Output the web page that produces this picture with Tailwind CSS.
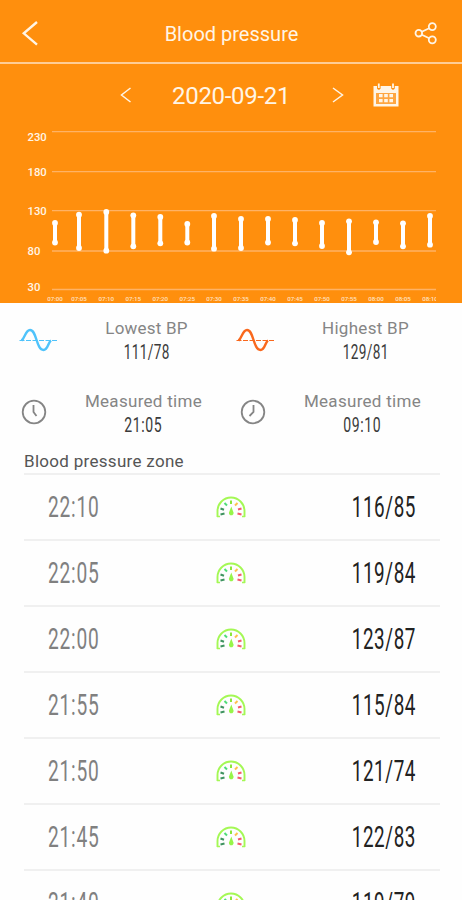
<!DOCTYPE html>
<html lang="en">
<head>
    <meta charset="UTF-8" />
    <meta name="viewport" content="width=device-width, initial-scale=1.0" />
    <title>Blood pressure</title>
    <script src="https://cdn.jsdelivr.net/npm/@tailwindcss/browser@4"></script>
</head>
<body class="h-screen overflow-hidden bg-[#fefefe] font-['Roboto',sans-serif] text-[#858585]">
<div class="flex flex-col w-full">
    <div class="h-[303px] bg-[#ff8f0d] text-[#fff5e6]">
        <!-- Header -->
        <header class="flex items-center justify-between h-16 pl-5 pr-6 pt-1 border-b-2 border-[#ffcd95]">
            <button title="Back">
                <svg class="w-5 h-7" viewBox="0 0 20 28" fill="none" stroke="currentColor" stroke-width="2.4">
                    <path d="M17 3L3.8 14.3L17 25.6" />
                </svg>
            </button>
            <h1 class="text-[20px] leading-7 pt-0.5 pl-[9px]">Blood pressure</h1>
            <button title="Share">
                <svg class="w-6 h-6" viewBox="0 0 24 24" fill="none" stroke="currentColor" stroke-width="1.8">
                    <circle cx="4.8" cy="12.2" r="3.3" />
                    <circle cx="18.3" cy="5.6" r="3.5" />
                    <circle cx="18.3" cy="18.8" r="3.5" />
                    <path d="M7.8 10.7L15.2 7.2M7.8 13.7L15.2 17.2" />
                </svg>
            </button>
        </header>

        <!-- Date picker -->
        <div class="flex items-center h-[62px] pl-[120px]">
            <svg class="w-3 h-4" viewBox="0 0 12 16" fill="none" stroke="currentColor" stroke-width="1.5">
                <path d="M10.5 1L1.5 8L10.5 15" />
            </svg>
            <span class="w-[118px] ml-[40px] text-[24px] leading-8 pt-0.5 tracking-[-0.3px] whitespace-nowrap">2020-09-21</span>
            <svg class="w-3 h-4 ml-[42px]" viewBox="0 0 12 16" fill="none" stroke="currentColor" stroke-width="1.5">
                <path d="M1 1L10.5 8L1 15" />
            </svg>
            <svg class="w-[26px] h-6 ml-[29px]" viewBox="0 0 26 24" fill="none">
                <path d="M0.5 3H4V5.5Q5.8 8 7.6 5.5V3H18.2V5.5Q20 8 21.8 5.5V3H25.5V23.5H0.5Z" fill="currentColor" />
                <path d="M5.8 0.5V5M20 0.5V5" stroke="currentColor" stroke-width="1.8" />
                <path d="M3 10H23V21H3Z" fill="#ffa640" />
                <path d="M6 11h3.6v3.2H6zM11.2 11h3.6v3.2h-3.6zM16.4 11h3.6v3.2h-3.6zM6 16h3.6v3.2H6zM11.2 16h3.6v3.2h-3.6zM16.4 16h3.6v3.2h-3.6z" fill="currentColor" />
            </svg>
        </div>

        <!-- Chart -->
        <svg id="chart" class="block w-[436px] h-[177px]" viewBox="0 126 436 177" fill="currentColor"></svg>
    </div>

    <!-- Summary -->
    <section class="grid grid-cols-[219px_219px] h-[146px] pt-[14px]">
        <div class="flex h-[73px]">
            <svg class="shrink-0 w-10 h-6 ml-[18px] mt-[11px] text-[#4fc3fb]" viewBox="0 0 40 24" fill="none" stroke="currentColor">
                <path d="M1.5 12.5H39" stroke-width="1.2" stroke-dasharray="5 1.5" />
                <path d="M3.5 12.5C7 10 7.5 2 12 2C19 2 18 22 25.5 22C30 22 30 14.5 33 12.5" stroke-width="2.4" />
            </svg>
            <div class="w-[177px] flex flex-col items-center shrink-0 pt-px text-center">
                <span class="text-[17px] leading-5 tracking-[0.2px]">Lowest BP</span>
                <span class="text-[20px] leading-7 tracking-[0.5px] text-[#3a3a3a] scale-x-[.68]">111/78</span>
            </div>
        </div>
        <div class="flex h-[73px]">
            <svg class="shrink-0 w-10 h-6 ml-4 mt-[11px] text-[#f9681d]" viewBox="0 0 40 24" fill="none" stroke="currentColor">
                <path d="M1.5 12.5H39" stroke-width="1.2" stroke-dasharray="5 1.5" />
                <path d="M3.5 12.5C7 10 7.5 2 12 2C19 2 18 22 25.5 22C30 22 30 14.5 33 12.5" stroke-width="2.4" />
            </svg>
            <div class="w-[181px] flex flex-col items-center shrink-0 pt-px text-center">
                <span class="text-[17px] leading-5 tracking-[0.3px]">Highest BP</span>
                <span class="text-[20px] leading-7 tracking-[0.5px] text-[#3a3a3a] scale-x-[.68]">129/81</span>
            </div>
        </div>
        <div class="flex h-[73px]">
            <svg class="shrink-0 w-[26px] h-[26px] ml-[21px] mt-[9px]" viewBox="0 0 26 26" fill="none" stroke="currentColor" stroke-width="1.8">
                <circle cx="13" cy="13" r="11.3" />
                <path d="M12.5 6V13L15.5 17" />
            </svg>
            <div class="w-[193px] flex flex-col items-center shrink-0 pt-px text-center">
                <span class="text-[17px] leading-5 tracking-[0.3px]">Measured time</span>
                <span class="text-[20px] leading-7 tracking-[0.9px] text-[#3a3a3a] scale-x-[.7]">21:05</span>
            </div>
        </div>
        <div class="flex h-[73px]">
            <svg class="shrink-0 w-[26px] h-[26px] ml-[21px] mt-[9px]" viewBox="0 0 26 26" fill="none" stroke="currentColor" stroke-width="1.8">
                <circle cx="13" cy="13" r="11.3" />
                <path d="M13.5 6V13L9.5 17" />
            </svg>
            <div class="w-[193px] flex flex-col items-center shrink-0 pt-px text-center">
                <span class="text-[17px] leading-5 tracking-[0.3px]">Measured time</span>
                <span class="text-[20px] leading-7 tracking-[0.9px] text-[#3a3a3a] scale-x-[.7]">09:10</span>
            </div>
        </div>
    </section>

    <!-- Readings -->
    <h2 class="h-[26px] pl-6 text-[17px] leading-[25px] tracking-[0.3px] text-[#555]">Blood pressure zone</h2>
    <ul id="readings" class="ml-6 mr-[22px] -mt-[2px] border-t-2 border-[#f0f0f0]"></ul>
</div>

<script>
    const chart = document.getElementById('chart');
    const readings = document.getElementById('readings');

    // grid lines: label, line y, label baseline
    const levels = [[230, 131.6, 140.5], [180, 171.7, 176], [130, 210.6, 215.3], [80, 251, 255.3], [30, 289.5, 290.5]];

    // time, x, top, bottom
    const bars = [
        ['07:00', 55, 223, 242.5], ['07:05', 79, 214.7, 248], ['07:10', 106.3, 212, 250.7],
        ['07:15', 133.3, 215.3, 246.3], ['07:20', 160.3, 217, 243.3], ['07:25', 187.3, 224, 242.5],
        ['07:30', 214, 216, 248.7], ['07:35', 241, 219, 248], ['07:40', 268, 219, 242.5],
        ['07:45', 295, 220, 243.3], ['07:50', 322, 223, 246], ['07:55', 349, 221.3, 252.3],
        ['08:00', 376, 222.3, 242], ['08:05', 403, 223.3, 246.3], ['08:10', 430, 216, 244.7],
    ];

    let svg = '';
    levels.forEach(([label, y, base]) => {
        svg += `<path d="M52 ${y}H436" stroke="#ffb265" stroke-width="1.3" />`;
        svg += `<text x="27.5" y="${base}" font-size="11.3" font-weight="500">${label}</text>`;
    });
    bars.forEach(([time, x, top, bottom]) => {
        svg += `<path d="M${x} ${top}V${bottom}" stroke="#fff" stroke-width="4" />`;
        svg += `<circle cx="${x}" cy="${top}" r="2.9" fill="#fff" /><circle cx="${x}" cy="${bottom}" r="2.9" fill="#fff" />`;
        svg += `<text x="${x}" y="300.7" font-size="6.2" font-weight="500" text-anchor="middle" fill="#ffe2c2">${time}</text>`;
    });
    chart.innerHTML = svg;

    const gauge = `
        <svg class="w-[30px] h-[22px]" viewBox="0 0 30 22" fill="none">
            <path d="M1.5 21V15A13.5 13.5 0 0 1 28.5 15V21" stroke="#a4f855" stroke-width="1.9" />
            <path d="M1 20.5H4M26 20.5H29" stroke="#a4f855" stroke-width="1.5" />
            <path d="M4.5 18.5L8.5 17.5M4.5 12.5L8 13.8" stroke="#3f9460" stroke-width="2" />
            <path d="M8.5 7L11 9.5" stroke="#4fdc78" stroke-width="2" />
            <path d="M15 4.5V8" stroke="#8be63a" stroke-width="2" />
            <path d="M21.5 7L19 9.5" stroke="#ffc04e" stroke-width="2" />
            <path d="M25.5 12.5L22 13.5M25.5 18.5L21.5 17.5" stroke="#f45a6c" stroke-width="2" />
            <path d="M15.3 10.5L17.5 16.5A2.3 2.3 0 1 1 13 16.5Z" fill="#97f549" />
        </svg>`;

    [
        ['22:10', '116/85'],
        ['22:05', '119/84'],
        ['22:00', '123/87'],
        ['21:55', '115/84'],
        ['21:50', '121/74'],
        ['21:45', '122/83'],
        ['21:40', '119/79'],
    ].forEach(([time, value]) => {
        const row = document.createElement('li');
        row.className = 'flex items-center h-[66px] px-6 border-b-2 border-[#f0f0f0]';
        row.innerHTML = `
            <span class="w-[168px] text-[29px] leading-8 tracking-[1.2px] text-[#808080] origin-left scale-x-[.66]">${time}</span>
            ${gauge}
            <span class="flex-1 text-right text-[29px] leading-8 tracking-[0.9px] text-[#222] origin-right scale-x-[.65]">${value}</span>`;
        readings.appendChild(row);
    });
</script>
</body>
</html>
